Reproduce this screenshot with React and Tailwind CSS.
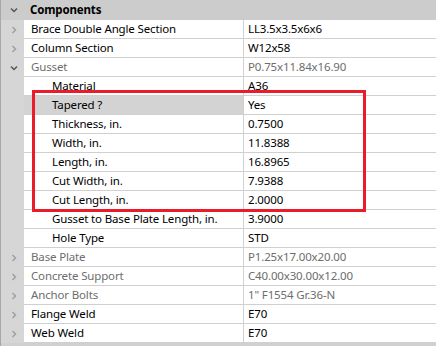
import React from "react";

const rows = [
  { name: "Brace Double Angle Section", value: "LL3.5x3.5x6x6", chev: "right", level: 1 },
  { name: "Column Section", value: "W12x58", chev: "right", level: 1 },
  { name: "Gusset", value: "P0.75x11.84x16.90", chev: "down", level: 1, gray: true, grayValue: true },
  { name: "Material", value: "A36", level: 2 },
  { name: "Tapered ?", value: "Yes", level: 2, selected: true },
  { name: "Thickness, in.", value: "0.7500", level: 2 },
  { name: "Width, in.", value: "11.8388", level: 2 },
  { name: "Length, in.", value: "16.8965", level: 2 },
  { name: "Cut Width, in.", value: "7.9388", level: 2 },
  { name: "Cut Length, in.", value: "2.0000", level: 2 },
  { name: "Gusset to Base Plate Length, in.", value: "3.9000", level: 2 },
  { name: "Hole Type", value: "STD", level: 2 },
  { name: "Base Plate", value: "P1.25x17.00x20.00", chev: "right", level: 1, gray: true, grayValue: true },
  { name: "Concrete Support", value: "C40.00x30.00x12.00", chev: "right", level: 1, gray: true, grayValue: true },
  { name: "Anchor Bolts", value: "1\" F1554 Gr.36-N", chev: "right", level: 1, gray: true, grayValue: true },
  { name: "Flange Weld", value: "E70", chev: "right", level: 1 },
  { name: "Web Weld", value: "E70", chev: "right", level: 1 },
];

function Chevron({ dir, dark }) {
  const color = dark ? "#555555" : "#a0a0a0";
  return (
    <svg width="8" height="8" viewBox="0 0 8 8" className="block">
      {dir === "right" ? (
        <polyline points="2.5,1 5.5,4 2.5,7" fill="none" stroke={color} strokeWidth="1.5" />
      ) : (
        <polyline points="1,2.5 4,5.5 7,2.5" fill="none" stroke={color} strokeWidth="1.5" />
      )}
    </svg>
  );
}

export default function App() {
  return (
    <div
      className="relative w-[436px] h-[346px] bg-white overflow-hidden text-[11.5px] tracking-[-0.15px] text-black"
      style={{ fontFamily: '"Noto Sans", "Open Sans", sans-serif' }}
    >
      <div className="flex flex-col border-l border-[#a8a8a8]">
        <div className="flex h-[20px] items-center bg-[#cccccc]">
          <div className="w-[23px] flex justify-center pl-[2px]">
            <Chevron dir="down" dark />
          </div>
          <div className="pl-[6px] font-bold leading-none">Components</div>
        </div>
        {rows.map((r, i) => (
          <div key={i} className="flex h-[19px]">
            <div className="w-[23px] shrink-0 bg-[#d6d6d6] flex items-center justify-center pl-[2px]">
              {r.chev && <Chevron dir={r.chev} dark={r.chev === "down"} />}
            </div>
            <div
              className={`w-[219px] shrink-0 flex items-center border-b border-[#d0d0d0] leading-none whitespace-nowrap ${
                r.selected ? "bg-[#d3d3d3]" : ""
              } ${r.level === 1 ? "pl-[7px]" : "pl-[28px]"} ${r.gray ? "text-[#6d6d6d]" : ""}`}
            >
              {r.name}
            </div>
            <div
              className={`flex-1 flex items-center border-b border-l border-[#d0d0d0] pl-[4px] leading-none whitespace-nowrap ${
                r.grayValue ? "text-[#6d6d6d]" : ""
              }`}
            >
              {r.value}
            </div>
          </div>
        ))}
        <div className="h-[3px] bg-[#d0d0d0]" />
      </div>
      <div className="absolute left-[32px] top-[90px] w-[334px] h-[122px] border-[3px] border-[#ea1c2a]" />
    </div>
  );
}
